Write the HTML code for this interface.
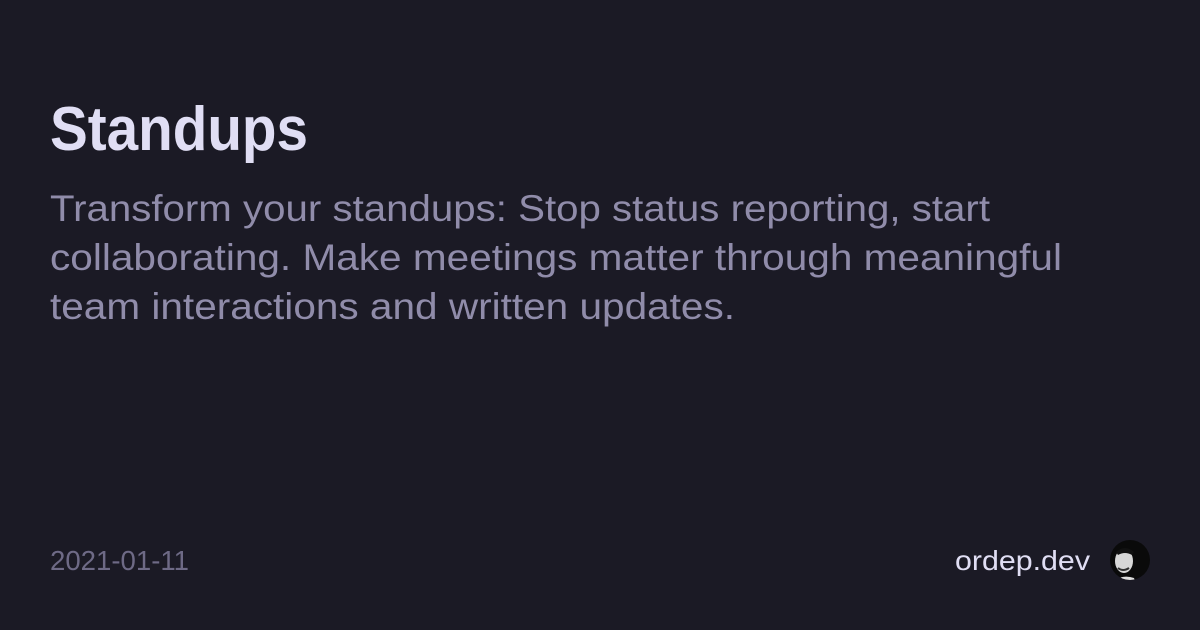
<!DOCTYPE html>
<html><head><style>
html,body{margin:0;padding:0;background:#1b1a25;}
svg{display:block}
text{font-family:"Liberation Sans",sans-serif;}
</style></head><body>
<svg width="1200" height="630" viewBox="0 0 1200 630" xmlns="http://www.w3.org/2000/svg">
<rect width="1200" height="630" fill="#1b1a25"/>
<text x="50" y="150" font-size="62" font-weight="bold" fill="#e0def4" textLength="258" lengthAdjust="spacingAndGlyphs">Standups</text>
<g font-size="37" fill="#908caa">
<text x="50" y="221" textLength="940" lengthAdjust="spacingAndGlyphs">Transform your standups: Stop status reporting, start</text>
<text x="50" y="270" textLength="1012" lengthAdjust="spacingAndGlyphs">collaborating. Make meetings matter through meaningful</text>
<text x="50" y="319" textLength="685" lengthAdjust="spacingAndGlyphs">team interactions and written updates.</text>
</g>
<text x="50" y="570" font-size="28" fill="#6e6a86" textLength="139" lengthAdjust="spacingAndGlyphs">2021-01-11</text>
<text x="955" y="570" font-size="28" fill="#e0def4" textLength="135" lengthAdjust="spacingAndGlyphs">ordep.dev</text>
<clipPath id="c"><circle cx="1130" cy="560" r="20"/></clipPath>
<g clip-path="url(#c)">
<rect x="1110" y="540" width="40" height="40" fill="#0a0a0a"/>
<ellipse cx="1124" cy="561" rx="9" ry="12" fill="#d8d8d8"/>
<path d="M1116 552 q9 -8 18 0 l-2 3 q-7 -4 -14 0z" fill="#111"/>
<path d="M1118 568 q5 4 11 0" stroke="#333" stroke-width="2" fill="none"/>
<path d="M1112 582 q10 -8 22 -4 l2 6z" fill="#e0e0e0"/>
</g>
</svg>
</body></html>
